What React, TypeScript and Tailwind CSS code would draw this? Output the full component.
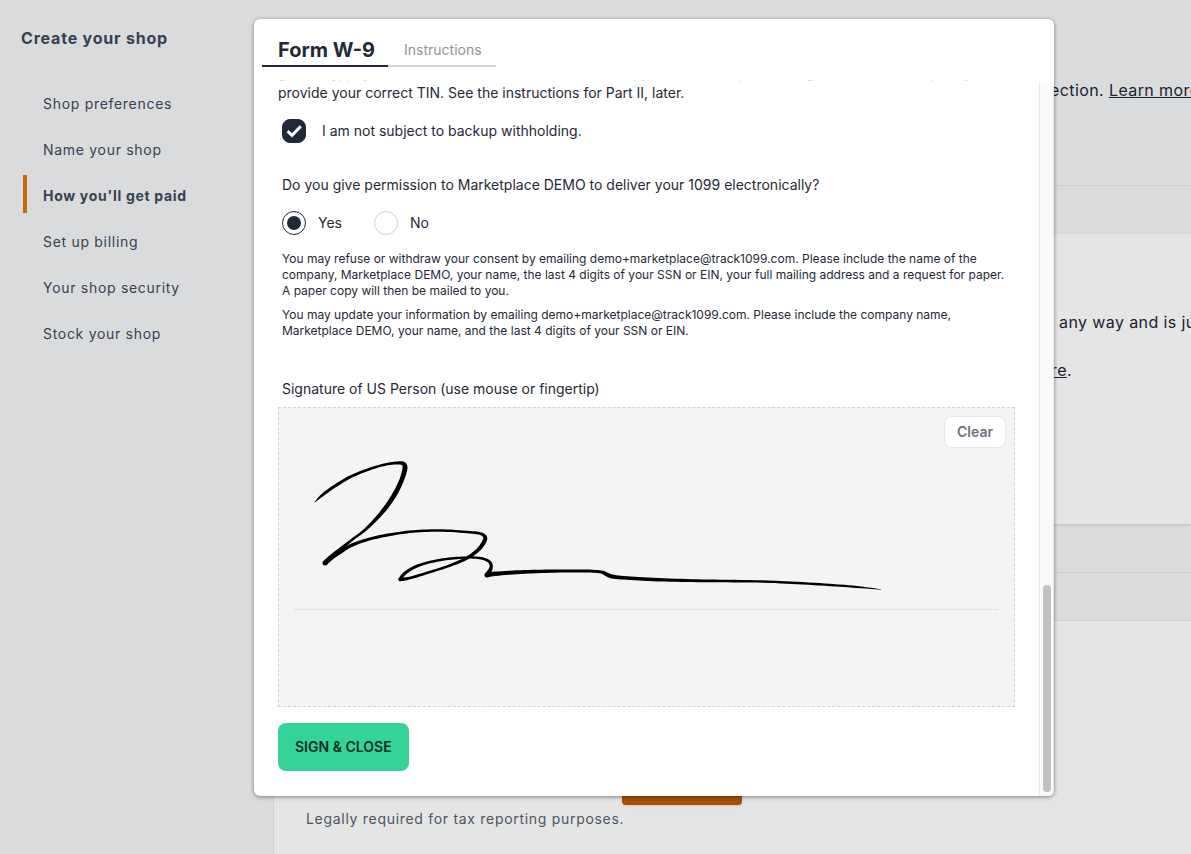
import { useState } from 'react';

const steps = [
  { name: 'Shop preferences' },
  { name: 'Name your shop' },
  { name: "How you'll get paid", active: true },
  { name: 'Set up billing' },
  { name: 'Your shop security' },
  { name: 'Stock your shop' },
];

// every point is x, y, pen width
const strokes = [
  [
    [37, 95, 0.5], [41, 91, 2], [47, 86, 3], [57, 79, 3.2], [72, 70, 2.9], [89, 63, 2.6],
    [105, 58, 2.5], [118, 56, 2.8], [125, 56.5, 4], [127, 61, 5], [124, 72, 4.6], [118, 85, 4.8],
    [109, 99, 4.6], [99, 111, 3.6], [87, 123, 2.8], [75, 132, 2.5], [65, 140, 3], [55, 148, 3.6],
    [47, 156, 5],
  ],
  [
    [47, 156, 5], [54, 150, 4.8], [62, 145, 4.2], [72, 139, 3.4], [85, 134, 3], [102, 129.5, 3],
    [122, 126, 2.7], [142, 124, 2.5], [165, 123.5, 2.5], [189, 125, 2.5], [202, 126.5, 2.8],
    [207, 130, 3.8], [206, 135, 4.2], [200, 143, 3.8], [189, 151, 3.2], [172, 158.5, 2.6],
    [152, 165, 2.5], [132, 171, 2.8], [122, 172.5, 3.6],
  ],
  [
    [122, 172.5, 3.6], [126, 167, 3.2], [134, 161.5, 3], [145, 157, 2.7], [162, 153, 2.5],
    [179, 151, 2.3], [195, 150.5, 2.3], [206, 152, 2.6], [212, 155.5, 3], [213, 161, 3.4],
    [209, 168, 5],
  ],
  [
    [209, 168, 5], [215, 167, 4.4], [235, 165.5, 4], [259, 164.5, 3.5], [285, 164, 3], [309, 164, 3],
    [323, 165, 3], [328, 167, 4], [334, 169.5, 4], [349, 171, 3.6], [375, 172.5, 3.5],
    [409, 173.5, 3], [442, 174, 2.6], [485, 174.5, 2.4], [519, 176, 2.5], [552, 178, 2.4],
    [579, 180, 2], [603, 182.5, 0.4],
  ],
];

const curve = (a: number, b: number, c: number, d: number, t: number) =>
  0.5 * (2 * b + (c - a) * t + (2 * a - 5 * b + 4 * c - d) * t * t + (3 * b - a - 3 * c + d) * t * t * t);

const smooth = (points: number[][]) => {
  const out: number[][] = [];
  for (let i = 0; i < points.length - 1; i++) {
    const p = points[i];
    const q = points[i + 1];
    const before = points[i - 1] || p;
    const after = points[i + 2] || q;
    for (let s = 0; s < 6; s++) {
      const t = s / 6;
      out.push([
        curve(before[0], p[0], q[0], after[0], t),
        curve(before[1], p[1], q[1], after[1], t),
        p[2] + (q[2] - p[2]) * t,
      ]);
    }
  }
  out.push(points[points.length - 1]);
  return out;
};

// closed shape that runs down one side of the pen line and back up the other
const outline = (points: number[][]) => {
  const line = smooth(points);
  const left: string[] = [];
  const right: string[] = [];
  line.forEach(([x, y, w], i) => {
    const a = line[i - 1] || line[i];
    const b = line[i + 1] || line[i];
    const length = Math.hypot(b[0] - a[0], b[1] - a[1]) || 1;
    const nx = ((a[1] - b[1]) / length) * (w / 2);
    const ny = ((b[0] - a[0]) / length) * (w / 2);
    left.push(`${x + nx} ${y + ny}`);
    right.unshift(`${x - nx} ${y - ny}`);
  });
  return 'M' + left.concat(right).join('L') + 'Z';
};

const Signature = () => (
  <svg className="absolute -left-px -top-px" width="640" height="200" viewBox="0 0 640 200" aria-label="Signature">
    {strokes.map((points, i) => (
      <g key={i}>
        <path d={outline(points)} />
        <circle cx={points[0][0]} cy={points[0][1]} r={points[0][2] / 2} />
      </g>
    ))}
  </svg>
);

const Sidebar = () => (
  <aside className="w-[273px] shrink-0 pl-[21px] pt-[26px] text-[#374151]">
    <h1 className="text-base font-bold tracking-wider">Create your shop</h1>
    <nav className="ml-0.5 mt-[33px]">
      <ul className="flex flex-col gap-2">
        {steps.map((step) => (
          <li key={step.name}>
            <a
              href="#"
              className={
                step.active
                  ? 'flex h-[38px] items-center border-l-4 border-[#c76c00] pl-4 pt-1 text-sm font-bold tracking-wider'
                  : 'flex h-[38px] items-center border-l-4 border-transparent pl-4 pt-1 text-sm tracking-wider'
              }
            >
              {step.name}
            </a>
          </li>
        ))}
      </ul>
    </nav>
  </aside>
);

const ShopPage = () => (
  <main className="min-w-0 flex-1 text-base tracking-wide whitespace-nowrap text-[#1a2130]">
    <div className="h-[186px] border-b border-[#cfd0d2] pl-[777px] pt-[78px]">
      ection. <a href="#" className="underline">Learn more</a>
    </div>
    <section className="mt-12 h-[290px] bg-[#e5e5e5] pl-[786px] pt-[76px] shadow">
      <p>any way and is just</p>
      <p className="-ml-2 mt-6"><a href="#" className="underline">re</a>.</p>
    </section>
    <div className="h-[49px] border-b border-[#cfd0d2]" />
    <section className="mt-[47px] h-[234px] border-l border-t border-[#d0d0d1] bg-[#e5e5e5] pl-8 pt-[136px]">
      <button aria-label="Begin form" className="ml-[316px] block h-12 w-[120px] rounded bg-[#a84e08] shadow" />
      <p className="mt-1 text-sm tracking-wider text-[#4b5563]">Legally required for tax reporting purposes.</p>
    </section>
  </main>
);

const FormModal = () => {
  const [checked, setChecked] = useState(true);
  const [answer, setAnswer] = useState('yes');

  return (
    <div role="dialog" aria-label="Form W-9" className="flex h-[calc(100vh-77px)] w-full max-w-[800px] flex-col overflow-hidden rounded-md bg-white text-sm text-[#1f2937] shadow-[0_1px_4px_rgba(0,0,0,0.45)]">
      <div role="tablist" className="flex h-12 shrink-0 items-stretch pl-2 text-left whitespace-nowrap">
        <button role="tab" aria-selected="true" className="w-[126px] border-b-2 border-[#1f2937] pl-4 pt-4 text-left text-xl font-bold leading-7">Form W-9</button>
        <button role="tab" aria-selected="false" className="w-[108px] border-b-2 border-[#d1d5db] pl-4 pt-4 text-left text-[#8f949e]">Instructions</button>
      </div>
      <div className="relative mt-3 flex min-h-0 flex-1">
        <form className="flex min-w-0 flex-1 flex-col justify-end overflow-hidden px-6 pb-[25px]" onSubmit={(e) => e.preventDefault()}>
          <p className="whitespace-nowrap">
            generally, payments other than interest and dividends, you are not required to sign the certification, but you
            <br />
            provide your correct TIN. See the instructions for Part II, later.
          </p>
          <label className="ml-1 mt-4 flex items-center gap-4">
            <span className="grid size-6">
              <input
                type="checkbox"
                checked={checked}
                onChange={(e) => setChecked(e.target.checked)}
                className="col-start-1 row-start-1 size-6 appearance-none rounded-lg border border-[#1f2937] checked:bg-[#1f2937]"
              />
              <svg viewBox="0 0 24 24" className="pointer-events-none col-start-1 row-start-1 size-6" fill="none" stroke="#fff" strokeWidth="3">
                <path d="M5.6 12.2 10 16.3 18.8 7.3" />
              </svg>
            </span>
            I am not subject to backup withholding.
          </label>
          <fieldset className="ml-1 mt-8">
            <legend>Do you give permission to Marketplace DEMO to deliver your 1099 electronically?</legend>
            <div className="mt-4 flex gap-8">
              <label className="flex items-center gap-3">
                <input
                  type="radio"
                  name="electronic"
                  checked={answer === 'yes'}
                  onChange={() => setAnswer('yes')}
                  className="size-6 appearance-none rounded-full border border-[#d1d1d1] bg-white bg-clip-content p-1 checked:border-[#1f2937] checked:bg-[#1f2937]"
                />
                Yes
              </label>
              <label className="flex items-center gap-3">
                <input
                  type="radio"
                  name="electronic"
                  checked={answer === 'no'}
                  onChange={() => setAnswer('no')}
                  className="size-6 appearance-none rounded-full border border-[#d1d1d1] bg-white bg-clip-content p-1 checked:border-[#1f2937] checked:bg-[#1f2937]"
                />
                No
              </label>
            </div>
          </fieldset>
          <div className="ml-1 mt-4 flex flex-col gap-2 text-xs">
            <p>
              You may refuse or withdraw your consent by emailing demo+marketplace@track1099.com. Please include the name of the
              company, Marketplace DEMO, your name, the last 4 digits of your SSN or EIN, your full mailing address and a request for paper.
              A paper copy will then be mailed to you.
            </p>
            <p>
              You may update your information by emailing demo+marketplace@track1099.com. Please include the company name,
              Marketplace DEMO, your name, and the last 4 digits of your SSN or EIN.
            </p>
          </div>
          <p className="ml-1 mt-10">Signature of US Person (use mouse or fingertip)</p>
          <div className="relative mt-2 flex h-[300px] shrink-0 flex-col items-end border border-dashed border-[#d1d5db] bg-[#f3f4f6] px-4 pt-2">
            <button type="button" className="-mr-2 h-8 rounded-lg border border-[#e5e7eb] bg-white px-3 font-semibold text-[#6b7280]">Clear</button>
            <div className="mt-[161px] w-full border-t border-dotted border-[#cbced3]" />
            <Signature />
          </div>
          <button type="submit" className="mt-4 h-12 shrink-0 self-start rounded-lg bg-[#36d399] px-[17px] font-semibold text-[#08301f]">SIGN &amp; CLOSE</button>
        </form>
        <div className="flex w-[15px] flex-col justify-end border-x border-[#e8e8e8] bg-[#fafafa] pb-1 pl-[3px]">
          <div className="h-[207px] w-2 rounded-full bg-[#c1c1c1]" />
        </div>
        <div className="pointer-events-none absolute inset-x-0 top-0 h-2 bg-linear-to-b from-white to-transparent" />
      </div>
    </div>
  );
};

const App = () => {
  return (
    <div className="relative flex h-screen overflow-hidden bg-[#dadbdd] font-['Inter',sans-serif]">
      <Sidebar />
      <ShopPage />
      <div className="absolute inset-0 flex items-start pl-[254px] pt-[19px]">
        <FormModal />
      </div>
    </div>
  );
};

export default App;
